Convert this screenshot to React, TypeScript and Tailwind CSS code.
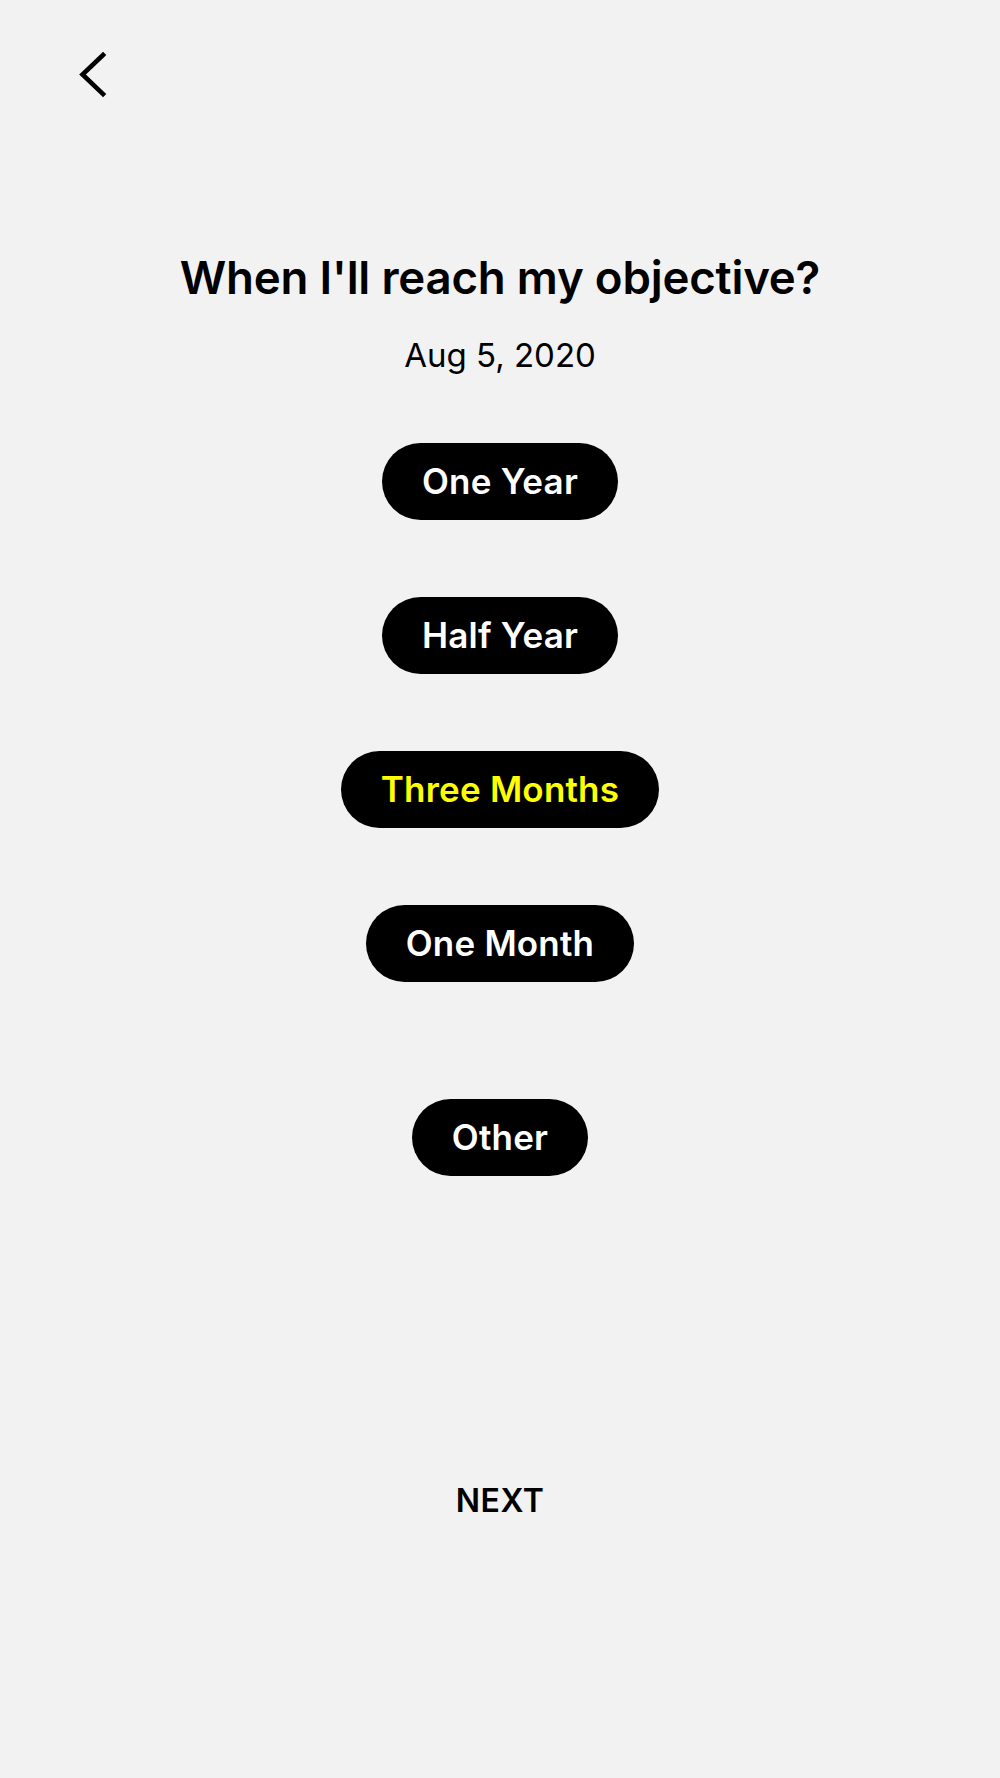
import React from 'react';

const options = ['One Year', 'Half Year', 'Three Months', 'One Month'];

const Pill: React.FC<{ label: string; active?: boolean }> = ({ label, active }) => (
  <button
    className={
      'h-[77px] px-[40px] rounded-full bg-black text-[35px] font-semibold leading-none tracking-[0.2px] ' +
      (active ? 'text-[#ffff00]' : 'text-white')
    }
  >
    {label}
  </button>
);

export default function App() {
  const selected = 'Three Months';

  return (
    <div className="min-h-[1778px] w-full bg-[#f2f2f2] font-['Inter','Liberation_Sans',sans-serif] text-black">
      {/* Top bar */}
      <div className="pl-[78px] pt-[53px] h-[250px]">
        <button className="w-[30px] h-[44px] flex items-center justify-center">
          <svg width="30" height="46" viewBox="0 0 30 46" fill="none">
            <path d="M25 3 L4.5 22.5 L25 42" stroke="black" strokeWidth="4.6" strokeLinecap="square" />
          </svg>
        </button>
      </div>

      <div className="flex flex-col items-center">
        <h1 className="text-[45.6px] leading-[56px] font-semibold tracking-[-0.2px]">
          When I'll reach my objective?
        </h1>
        <p className="mt-[29px] text-[33px] leading-[40px]">Aug 5, 2020</p>

        <div className="mt-[68px] flex flex-col items-center gap-[77px]">
          {options.map((o) => (
            <Pill key={o} label={o} active={o === selected} />
          ))}
        </div>

        <div className="mt-[117px]">
          <Pill label="Other" />
        </div>

        <button className="mt-[305px] text-[32px] leading-[40px] font-semibold tracking-[0.5px]">NEXT</button>
      </div>
    </div>
  );
}
